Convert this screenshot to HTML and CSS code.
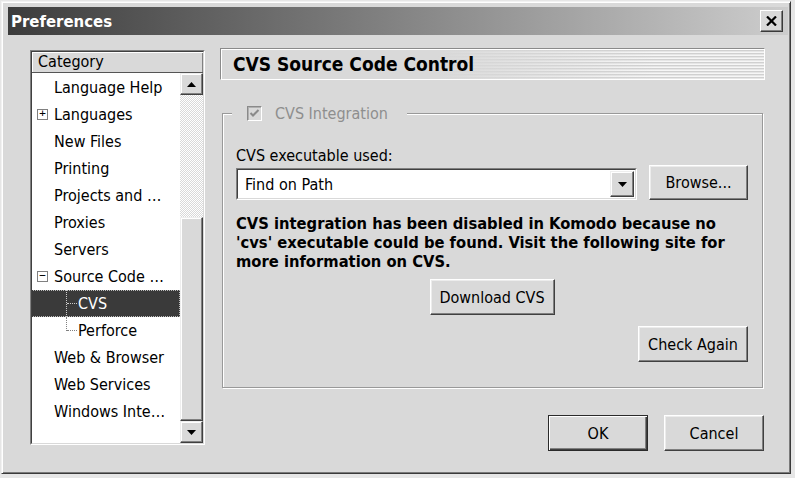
FILE: index.html
```html
<!DOCTYPE html>
<html>
<head>
<meta charset="utf-8">
<link rel="stylesheet" href="styles.css">
</head>
<body>
<div class="window">
  <div class="titlebar">
    <span class="title">Preferences</span>
    <div class="close"><svg width="11" height="10" viewBox="0 0 11 10"><path d="M1 0.5 L10 9.5 M10 0.5 L1 9.5" stroke="#000" stroke-width="2.2"/></svg></div>
  </div>
  <div class="content">
    <div class="tree">
      <div class="tree-in">
        <div class="tree-head">Category</div>
        <div class="tree-body">
          <ul class="rows">
            <li class="row"><span class="exp"></span>Language Help</li>
            <li class="row"><span class="exp"><span class="box">+</span></span>Languages</li>
            <li class="row"><span class="exp"></span>New Files</li>
            <li class="row"><span class="exp"></span>Printing</li>
            <li class="row"><span class="exp"></span>Projects and …</li>
            <li class="row"><span class="exp"></span>Proxies</li>
            <li class="row"><span class="exp"></span>Servers</li>
            <li class="row"><span class="exp"><span class="box">−</span></span>Source Code …</li>
            <li class="row child mid selected"><span class="conn"></span>CVS</li>
            <li class="row child last"><span class="conn"></span>Perforce</li>
            <li class="row"><span class="exp"></span>Web &amp; Browser</li>
            <li class="row"><span class="exp"></span>Web Services</li>
            <li class="row"><span class="exp"></span>Windows Inte…</li>
          </ul>
          <div class="scrollbar">
            <div class="sb-btn"><svg width="9" height="5" viewBox="0 0 9 5"><path d="M0 5 L4.5 0 L9 5 Z" fill="#000"/></svg></div>
            <div class="sb-track"></div>
            <div class="sb-thumb"></div>
            <div class="sb-btn"><svg width="9" height="5" viewBox="0 0 9 5"><path d="M0 0 L9 0 L4.5 5 Z" fill="#000"/></svg></div>
          </div>
        </div>
      </div>
    </div>
    <div class="main">
      <div class="page-head">CVS Source Code Control</div>
      <div class="group">
        <div class="legend">
          <span class="cb"><svg width="11" height="11" viewBox="0 0 11 11"><path d="M1.5 5 L4 7.5 L9.5 2" stroke="#8a8a8a" stroke-width="2" fill="none"/></svg></span>
          <span class="legend-text">CVS Integration</span>
        </div>
        <div class="label">CVS executable used:</div>
        <div class="select-row">
          <div class="select">
            <div class="select-in">
              <span class="select-text">Find on Path</span>
              <span class="dd"><svg width="9" height="5" viewBox="0 0 9 5"><path d="M0 0 L9 0 L4.5 5 Z" fill="#000"/></svg></span>
            </div>
          </div>
          <button class="btn browse">Browse...</button>
        </div>
        <p class="msg">CVS integration has been disabled in Komodo because no<br>'cvs' executable could be found. Visit the following site for<br>more information on CVS.</p>
        <div class="center-row"><button class="btn dl">Download CVS</button></div>
        <div class="right-row"><button class="btn check">Check Again</button></div>
      </div>
      <div class="footer">
        <button class="btn default">OK</button>
        <button class="btn cancel">Cancel</button>
      </div>
    </div>
  </div>
</div>
</body>
</html>
```

FILE: styles.css
```css
* { box-sizing: border-box; }
html, body { margin: 0; padding: 0; }
body {
  background: #e6e6e6;
  font-family: "DejaVu Sans Condensed", "DejaVu Sans", sans-serif;
  font-size: 16px;
  color: #000;
  width: 795px;
  height: 478px;
  overflow: hidden;
}
.window {
  margin: 1px 0 0 1px;
  width: 790px;
  height: 473px;
  background: #d9d9d9;
  border: 1px solid;
  border-color: #f2f2f2 #3a3a3a #3a3a3a #f2f2f2;
  box-shadow: inset 1px 1px #ffffff, inset -1px -1px #7a7a7a;
}
.titlebar {
  margin: 5px 2px 0 6px;
  height: 28px;
  background: linear-gradient(to right, #3c3c3c 0%, #7c7c7c 45%, #cdcdcd 100%);
  display: flex;
  align-items: center;
  justify-content: space-between;
  padding: 0 5px 0 3px;
}
.title {
  color: #fff;
  font-weight: bold;
  font-size: 16.6px;
}
.close {
  width: 23px;
  height: 22px;
  background: #d9d9d9;
  border: 1px solid;
  border-color: #fff #3a3a3a #3a3a3a #fff;
  box-shadow: inset -1px -1px #808080;
  display: flex;
  align-items: center;
  justify-content: center;
}
.content {
  display: flex;
  margin-top: 13px;
  padding-left: 28px;
}
.tree {
  margin-top: 2px;
  width: 175px;
  height: 395px;
  border: 1px solid;
  border-color: #808080 #fff #fff #808080;
}
.tree-in {
  height: 100%;
  border: 1px solid;
  border-color: #404040 #d9d9d9 #d9d9d9 #404040;
  background: #fff;
  display: flex;
  flex-direction: column;
}
.tree-head {
  height: 21px;
  background: #d9d9d9;
  border-bottom: 1px solid #555;
  box-shadow: inset 1px 1px #fff, inset -1px 0 #808080;
  padding-left: 6px;
  line-height: 20px;
  flex: none;
}
.tree-body {
  flex: 1;
  display: flex;
  min-height: 0;
}
.rows {
  list-style: none;
  margin: 0;
  padding: 1px 0 0 0;
  flex: 1;
  overflow: hidden;
}
.row {
  height: 27px;
  line-height: 27px;
  display: flex;
  align-items: center;
  white-space: nowrap;
  position: relative;
}
.exp {
  width: 22px;
  flex: none;
  display: flex;
  align-items: center;
  padding-left: 5px;
}
.box {
  width: 11px;
  height: 11px;
  border: 1px solid #808080;
  font-size: 11px;
  line-height: 8px;
  text-align: center;
  color: #000;
  background: #fff;
  font-family: "DejaVu Sans Mono", monospace;
}
.child { padding-left: 34px; }
.conn {
  width: 12px;
  height: 27px;
  flex: none;
  position: relative;
}
.conn::before {
  content: "";
  position: absolute;
  left: 0;
  top: 0;
  height: 27px;
  border-left: 1px dotted #808080;
}
.last .conn::before { height: 14px; }
.conn::after {
  content: "";
  position: absolute;
  left: 1px;
  top: 13px;
  width: 10px;
  border-top: 1px dotted #808080;
}
.selected {
  background: #3a3a3a;
  color: #fff;
  outline: 1px dotted #bbb;
  outline-offset: -1px;
  margin-left: -1px;
  padding-left: 35px;
}
.selected .conn::before, .selected .conn::after { border-color: #ccc; }
.scrollbar {
  width: 23px;
  flex: none;
  display: flex;
  flex-direction: column;
}
.sb-btn {
  height: 22px;
  flex: none;
  background: #d9d9d9;
  border: 1px solid;
  border-color: #eee #404040 #404040 #eee;
  box-shadow: inset -1px -1px #808080, inset 1px 1px #fff;
  display: flex;
  align-items: center;
  justify-content: center;
}
.sb-track {
  height: 122px;
  flex: none;
  background: repeating-conic-gradient(#ffffff 0 25%, #d9d9d9 0 50%) 0 0 / 2px 2px;
}
.sb-thumb {
  flex: 1;
  background: #d9d9d9;
  border: 1px solid;
  border-color: #eee #404040 #404040 #eee;
  box-shadow: inset -1px -1px #808080, inset 1px 1px #fff;
}
.main {
  margin-left: 15px;
  width: 545px;
  display: flex;
  flex-direction: column;
}
.page-head {
  height: 32px;
  border: 1px solid;
  border-color: #8a8a8a #fff #fff #8a8a8a;
  box-shadow: inset 1px 1px #fff;
  background:
    linear-gradient(to right, #d9d9d9 40%, rgba(217,217,217,0) 80%),
    repeating-linear-gradient(to bottom, #f6f6f6 0 1px, #d0d0d0 1px 2px, #e6e6e6 2px 3px);
  font-weight: bold;
  font-size: 19px;
  line-height: 30px;
  padding-left: 12px;
}
.group {
  margin: 33px 2px 0 2px;
  border: 1px solid #999;
  box-shadow: 1px 1px #fff, inset 1px 1px #fff;
  padding: 0 14px 25px 13px;
  display: flex;
  flex-direction: column;
}
.legend {
  margin: -9px 0 0 -4px;
  align-self: flex-start;
  background: #d9d9d9;
  padding: 0 19px 0 15px;
  height: 17px;
  display: flex;
  align-items: center;
}
.cb {
  width: 15px;
  height: 15px;
  border: 1px solid;
  border-color: #8a8a8a #fff #fff #8a8a8a;
  box-shadow: inset 1px 1px #b0b0b0;
  background: #d9d9d9;
  display: flex;
  align-items: center;
  justify-content: center;
  margin-right: 13px;
}
.legend-text { color: #8e8e8e; }
.label {
  margin-top: 24px;
  line-height: 19px;
  height: 19px;
}
.select-row {
  display: flex;
  align-items: flex-end;
  justify-content: space-between;
}
.select {
  width: 401px;
  height: 32px;
  border: 1px solid;
  border-color: #808080 #fff #fff #808080;
}
.select-in {
  height: 100%;
  border: 1px solid;
  border-color: #404040 #d9d9d9 #d9d9d9 #404040;
  background: #fff;
  display: flex;
  align-items: center;
  justify-content: space-between;
  padding: 1px 1px 1px 7px;
}
.dd {
  width: 24px;
  height: 100%;
  background: #d9d9d9;
  border: 1px solid;
  border-color: #eee #404040 #404040 #eee;
  box-shadow: inset -1px -1px #808080, inset 1px 1px #fff;
  display: flex;
  align-items: center;
  justify-content: center;
}
.btn {
  font-family: inherit;
  font-size: 16px;
  color: #000;
  background: #d9d9d9;
  border: 1px solid;
  border-color: #fff #404040 #404040 #fff;
  box-shadow: inset -1px -1px #808080, inset 1px 1px #ececec;
  height: 36px;
  padding: 0;
}
.browse { width: 99px; height: 35px; }
.msg {
  margin: 14px 0 0 0;
  font-weight: bold;
  font-size: 16.4px;
  line-height: 19px;
}
.center-row {
  display: flex;
  justify-content: center;
  margin-top: 8px;
}
.dl { width: 125px; }
.right-row {
  display: flex;
  justify-content: flex-end;
  margin-top: 11px;
}
.check { width: 110px; }
.footer {
  margin-top: 27px;
  padding-right: 1px;
  display: flex;
  justify-content: flex-end;
  gap: 16px;
}
.footer .btn { width: 100px; }
.default {
  border: 1px solid #2a2a2a;
  box-shadow: inset 1px 1px #fff, inset -1px -1px #404040, inset -2px -2px #808080;
}
```
